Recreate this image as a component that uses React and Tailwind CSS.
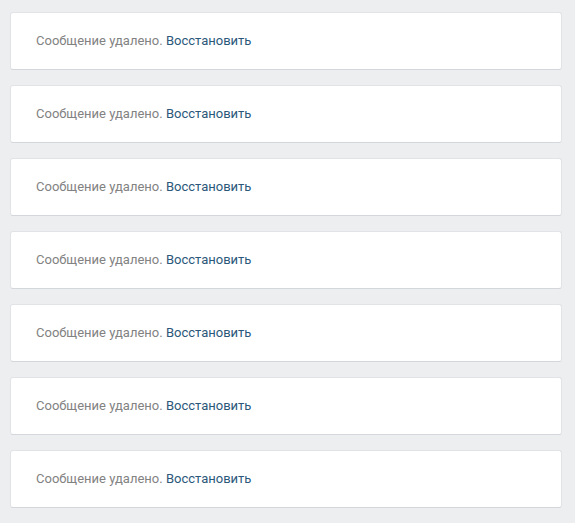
import React from "react";

function DeletedMessage() {
  return (
    <div className="h-[58px] bg-white border border-[#e1e3e6] border-b-[#d3d6da] rounded-[3px] flex items-center pl-[25px]">
      <p className="text-[13px] text-[#828282]">
        Сообщение удалено.{" "}
        <a href="#" className="text-[#2b587a]">
          Восстановить
        </a>
      </p>
    </div>
  );
}

export default function App() {
  const items = [1, 2, 3, 4, 5, 6, 7];
  return (
    <div
      className="min-h-[523px] bg-[#edeef0] pt-3 pb-[15px] pl-[10px] pr-[13px] flex flex-col gap-[15px]"
      style={{ fontFamily: "Roboto, 'Open Sans', sans-serif" }}
    >
      {items.map((i) => (
        <DeletedMessage key={i} />
      ))}
    </div>
  );
}
